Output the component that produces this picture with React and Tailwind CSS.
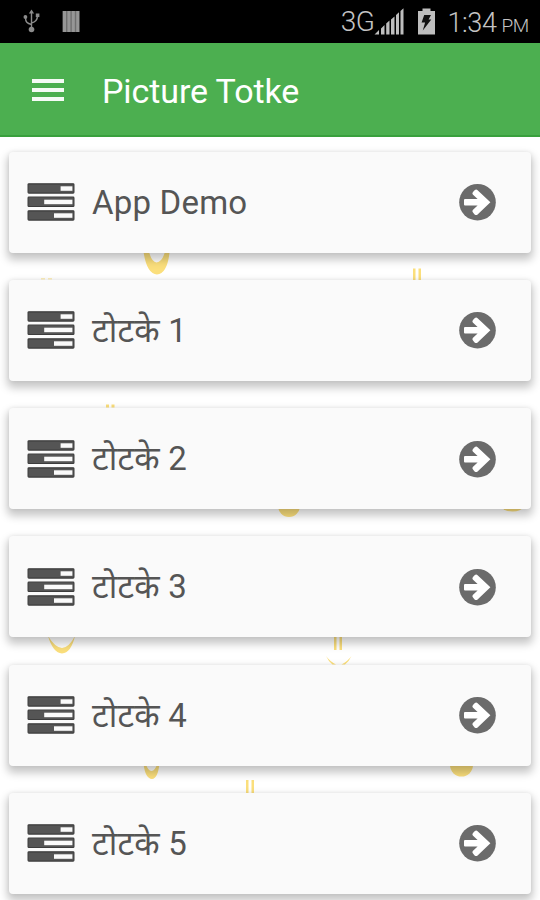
const items = ['App Demo', 'टोटके 1', 'टोटके 2', 'टोटके 3', 'टोटके 4', 'टोटके 5'];

function UsbIcon() {
  return (
    <svg width="18" height="25" viewBox="0 0 18 25" fill="none" stroke="#8c8c8c" strokeWidth="1.4">
      <path d="M8.5 20V3M8.5 15.5C4 14.5 2.5 13 2.5 8.5M8.5 14C13 13 14.5 11 14.5 6.5" />
      <path d="M8.5 0.5l2.6 4H5.9z" fill="#8c8c8c" stroke="none" />
      <circle cx="8.5" cy="20.5" r="2.8" fill="#8c8c8c" stroke="none" />
      <circle cx="2.4" cy="8" r="1.9" fill="#8c8c8c" stroke="none" />
      <path d="M12.8 4.5h3.6v3.6h-3.6z" fill="#8c8c8c" stroke="none" />
    </svg>
  );
}

function BarsIcon() {
  return (
    <svg width="18" height="21" viewBox="0 0 18 21">
      <path d="M0.5 0h17v21h-17z" fill="#6e6e6e" />
      <path d="M1 0h3v21h-3zM5.4 0h3v21h-3zM9.8 0h3v21h-3zM14.2 0h3v21h-3z" fill="#969696" />
    </svg>
  );
}

function SignalIcon() {
  return (
    <svg width="31" height="27" viewBox="0 0 31 27" fill="#bebebe">
      <path d="M0.5 26.5L5 22v4.5zM7 20.5L10.5 17v9.5H7zM12.2 15.5l3.3-3v14h-3.3zM17 11.5l3.5-3v18H17zM22 7l3-2.7v22.2h-3zM26.5 3L29.5 0.3v26.2h-3z" />
    </svg>
  );
}

function BatteryIcon() {
  return (
    <svg width="19" height="27" viewBox="0 0 19 27">
      <path d="M5.5 0.5h8v2.5h4.5v23.5h-17V3h4.5z" fill="#bebebe" />
      <path d="M7.2 7H14l-2.4 4.5h2.7L5.8 22.5l2.3-8H4.6z" fill="#111" />
    </svg>
  );
}

function TasksIcon() {
  return (
    <svg width="48" height="38" viewBox="0 0 48 38" className="shrink-0">
      <g fill="#555" stroke="#3c3c3c" strokeWidth="1.2">
        <rect x="1.1" y="0.8" width="45.8" height="9.3" rx="0.8" />
        <rect x="1.1" y="14.2" width="45.8" height="9.3" rx="0.8" />
        <rect x="1.1" y="27.8" width="45.8" height="9.3" rx="0.8" />
      </g>
      <g fill="#fafafa">
        <rect x="33.6" y="3.3" width="11.8" height="4.5" />
        <rect x="17.2" y="16.7" width="28.2" height="4.5" />
        <rect x="27" y="30.3" width="18.4" height="4.5" />
      </g>
    </svg>
  );
}

function ArrowIcon() {
  return (
    <svg width="38" height="38" viewBox="0 0 38 38" className="shrink-0">
      <circle cx="19.5" cy="19.2" r="18.3" fill="#6b6b6b" />
      <path d="M7 16h12.600l-4.800-4.400q-1-1.400 0.200-2.600l1.600-1.800q1.600-1.400 3 0L32.400 19.200 19.600 31.400q-1.400 1.400-3 0l-1.600-1.800q-1.200-1.200-0.200-2.600l4.800-4.400H7q-1 0-1-1v-4.600q0-1 1-1z" fill="#fff" />
    </svg>
  );
}

// wallpaper doodles that peek out between the cards
function Doodles() {
  return (
    <svg width="540" height="763" viewBox="0 137 540 763" className="absolute inset-0">
      <g fill="#fbdf7c">
        <path d="M143 248Q146 274 157 274.500Q168 274 170 248H166Q163 262 156.500 262.500Q151 262 148 248z" />
        <path d="M413 268.500h2.500v11.500h-2.500zM418.500 268.500h2.500v11.500h-2.500z" />
        <path d="M41 278h4v1.500h-4zM48 278h4v1.500h-4z" opacity="0.5" />
        <path d="M106 404.500h3v3h-3zM111.500 404.500h3v3h-3z" />
        <circle cx="289" cy="506" r="11" />
        <ellipse cx="512.500" cy="507" rx="10" ry="4.500" />
        <path d="M48 636Q53 653 62 653.500Q71 653 75 636Q69 647.500 62 648Q55 647.500 48 636z" />
        <path d="M334 636h2.500v14h-2.500zM339.500 636h2.500v14h-2.500z" />
        <path d="M326 656Q328.500 661.500 332.500 664.500H336Q329.500 661 326 656zM351.500 656Q349 661.500 345 664.500H341.500Q348 661 351.500 656z" />
        <path d="M143.500 763Q145 778.500 152 779Q158 778.500 159.500 763H157.500Q155 771 151.500 771Q148 771 145.500 763z" />
        <circle cx="461.500" cy="765" r="11.500" />
        <path d="M246 780h2.500v13h-2.500zM251.500 780h2.500v13h-2.500z" />
      </g>
    </svg>
  );
}

function Card({ title }) {
  return (
    <div className="flex h-[101px] shrink-0 items-center rounded-[4px] bg-[#fafafa] pl-[18px] pr-[35px] shadow-[0_5px_9px_2px_rgba(0,0,0,0.22),0_0_4px_rgba(0,0,0,0.06)]">
      <TasksIcon />
      <span className="ml-[17px] flex-1 text-[33px] leading-none tracking-[0.2px] text-[#555]">{title}</span>
      <ArrowIcon />
    </div>
  );
}

function App() {
  return (
    <div className="flex h-[900px] w-[540px] flex-col overflow-hidden bg-white font-['Roboto','Noto_Sans_Devanagari','Noto_Sans',sans-serif]">
      <div className="flex h-[43px] shrink-0 items-center bg-black pl-[23px] pr-[11px] text-[#c4c4c4]">
        <UsbIcon />
        <div className="ml-[21px]">
          <BarsIcon />
        </div>
        <span className="ml-auto text-[28px] font-[350] leading-none tracking-[-0.5px]">3G</span>
        <SignalIcon />
        <div className="ml-[12px]">
          <BatteryIcon />
        </div>
        <span className="ml-[11px] mt-[3px] text-[27px] font-[350] leading-none tracking-[-0.4px]">1:34</span>
        <span className="ml-[5px] mt-[7px] text-[19px] font-[350] leading-none tracking-[-0.3px]">PM</span>
      </div>
      <div className="flex h-[94px] shrink-0 items-center border-b-2 border-[#39a03d] bg-[#4caf50] pl-8 pt-[2px]">
        <div className="flex w-8 flex-col gap-[5px]">
          <div className="h-1 bg-white/95" />
          <div className="h-1 bg-white/95" />
          <div className="h-1 bg-white/95" />
        </div>
        <h1 className="ml-[38px] mt-[2px] text-[34px] leading-none tracking-[-0.1px] text-white">Picture Totke</h1>
      </div>
      <div className="relative min-h-0 flex-1">
        <Doodles />
        <div className="relative flex flex-col gap-[27.3px] pl-[9px] pr-[9px] pt-[14.5px]">
          {items.map((title) => (
            <Card key={title} title={title} />
          ))}
        </div>
      </div>
    </div>
  );
}

export default App;
